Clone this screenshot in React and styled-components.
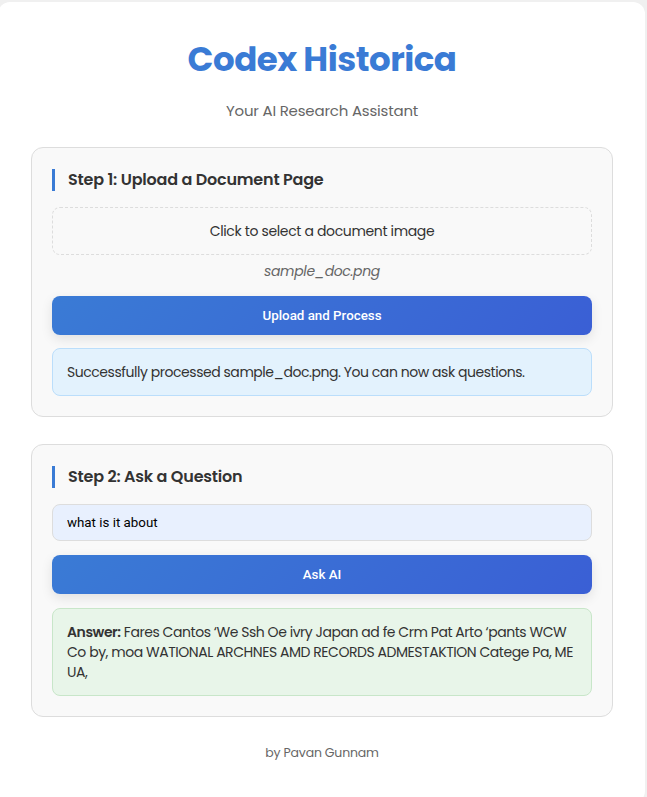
import React from "react";
import styled, { createGlobalStyle } from "styled-components";

const GlobalStyle = createGlobalStyle`
  html, body {
    margin: 0;
    padding: 0;
    background: #f0f0f0;
  }
  body {
    font-family: "Poppins", "Inter", "Noto Sans", sans-serif;
    color: #333;
    overflow: hidden;
  }
  * { box-sizing: border-box; }
`;

const Card = styled.main`
  margin: 2px 2px 0 -2px;
  padding: 36px 32px 40px 33px;
  min-height: 795px;
  background: #fff;
  border-radius: 12px;
  display: flex;
  flex-direction: column;
`;

const Title = styled.h1`
  margin: 0;
  text-align: center;
  font-size: 34px;
  line-height: 43px;
  font-weight: 700;
  color: #3a7bd5;
  letter-spacing: -0.5px;
`;

const Subtitle = styled.p`
  margin: 19px 0 0;
  text-align: center;
  font-size: 15px;
  line-height: 22px;
  color: #666;
  letter-spacing: -0.2px;
`;

const Section = styled.section`
  margin-top: ${(p) => p.$top}px;
  background: #f9f9f9;
  border: 1px solid #ddd;
  border-radius: 12px;
  padding: 21px 20px 20px;
  display: flex;
  flex-direction: column;
`;

const StepTitle = styled.h2`
  margin: 0;
  border-left: 3px solid #3a7bd5;
  padding-left: 13px;
  font-size: 16px;
  line-height: 22px;
  font-weight: 600;
  color: #333;
  letter-spacing: -0.2px;
`;

const DropZone = styled.div`
  margin-top: 16px;
  height: 48px;
  border: 1px dashed #ddd;
  border-radius: 8px;
  display: flex;
  align-items: center;
  justify-content: center;
  font-size: 14px;
  letter-spacing: -0.35px;
  color: #333;
  cursor: pointer;
`;

const FileName = styled.p`
  margin: 6px 0 0;
  text-align: center;
  font-size: 14px;
  line-height: 20px;
  font-style: italic;
  letter-spacing: -0.35px;
  color: #666;
`;

const ActionButton = styled.button`
  margin-top: ${(p) => p.$top}px;
  height: 39px;
  border: none;
  border-radius: 8px;
  background: linear-gradient(135deg, #3a7bd5 0%, #3a5fd5 100%);
  color: #fff;
  font-family: Roboto, "Liberation Sans", sans-serif;
  font-size: 13.333px;
  font-weight: 500;
  box-shadow: 0 4px 12px rgba(0, 0, 0, 0.1);
  cursor: pointer;
`;

const Message = styled.div`
  margin-top: ${(p) => p.$top}px;
  padding: 13px 14px;
  border-radius: 8px;
  font-size: 14px;
  line-height: 20px;
  letter-spacing: -0.45px;
  color: #333;
  background: ${(p) => (p.$tone === "success" ? "#e8f5e9" : "#e3f2fd")};
  border: 1px solid ${(p) => (p.$tone === "success" ? "#c8e6c9" : "#bbdefb")};

  strong {
    font-weight: 600;
  }
`;

const QuestionInput = styled.input`
  margin-top: 16px;
  height: 37px;
  padding: 0 14px;
  border: 1px solid #ddd;
  border-radius: 8px;
  background: #e8f0fe;
  font-family: Roboto, "Liberation Sans", sans-serif;
  font-size: 13.333px;
  color: #000;
  outline: none;
`;

const Footer = styled.footer`
  margin-top: 26px;
  text-align: center;
  font-size: 12.5px;
  line-height: 20px;
  letter-spacing: -0.2px;
  color: #666;
`;

export default function App() {
  return (
    <>
      <GlobalStyle />
      <Card>
        <Title>Codex Historica</Title>
        <Subtitle>Your AI Research Assistant</Subtitle>

        <Section $top={25}>
          <StepTitle>Step 1: Upload a Document Page</StepTitle>
          <DropZone>Click to select a document image</DropZone>
          <FileName>sample_doc.png</FileName>
          <ActionButton $top={15}>Upload and Process</ActionButton>
          <Message $top={13}>
            Successfully processed sample_doc.png. You can now ask questions.
          </Message>
        </Section>

        <Section $top={27}>
          <StepTitle>Step 2: Ask a Question</StepTitle>
          <QuestionInput defaultValue="what is it about" />
          <ActionButton $top={14}>Ask AI</ActionButton>
          <Message $top={14} $tone="success">
            <strong>Answer:</strong> Fares Cantos ‘We Ssh Oe ivry Japan ad fe Crm Pat Arto ‘pants WCW
            Co by, moa WATIONAL ARCHNES AMD RECORDS ADMESTAKTION Catege Pa, ME UA,
          </Message>
        </Section>

        <Footer>by Pavan Gunnam</Footer>
      </Card>
    </>
  );
}
